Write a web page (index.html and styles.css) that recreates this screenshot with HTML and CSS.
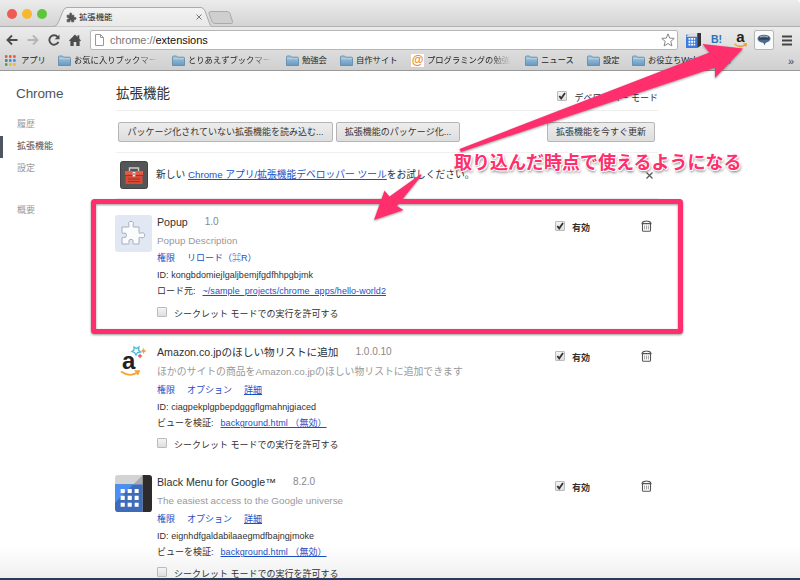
FILE: index.html
```html
<!DOCTYPE html>
<html lang="ja">
<head>
  <meta charset="UTF-8">
  <title>拡張機能</title>
  <link rel="stylesheet" href="styles.css">
</head>
<body>
  <!-- shared icons -->
  <svg class="defs" width="0" height="0">
    <defs>
      <linearGradient id="folder-fill" x1="0" y1="0" x2="0" y2="1"><stop offset="0" stop-color="#a5c8e2"/><stop offset="1" stop-color="#6799bf"/></linearGradient>
      <linearGradient id="tab-fill" x1="0" y1="0" x2="0" y2="1"><stop offset="0" stop-color="#f3f3f3"/><stop offset="1" stop-color="#e8e8e8"/></linearGradient>
      <symbol id="folder" viewBox="0 0 13 12">
        <path d="M.5 10.5V2Q.5 1 1.5 1H4.5L5.5 2.2H11.5Q12.5 2.2 12.5 3.2V10.5Z" fill="url(#folder-fill)" stroke="#5c87a8" stroke-width=".8"/>
        <path d="M1 3.7H12" stroke="#c3dced" stroke-width=".7"/>
      </symbol>
      <symbol id="trash" viewBox="0 0 11 12">
        <path d="M1.5 4V10.2Q1.5 11.3 2.6 11.3H8.4Q9.5 11.3 9.5 10.2V4M.5 3.6H10.5M1 3Q2 1.6 3.5 1.4Q5.5 .5 7.5 1.4Q9 1.6 10 3" fill="none" stroke="#555" stroke-width="1.1"/>
        <path d="M3.6 5.5V9.5M5.5 5.5V9.5M7.4 5.5V9.5" stroke="#999" stroke-width=".9"/>
      </symbol>
      <symbol id="puzzle" viewBox="0 0 28 28">
        <path d="M3 8H9.5Q10.5 8 10 6.6Q8.6 2.5 12 2.3Q15.5 2.5 14 6.6Q13.6 8 14.6 8H20V13.5Q20 14.7 21.3 14.2Q25.5 12.8 25.7 16.3Q25.5 19.8 21.3 18.4Q20 18 20 19.2V25H14.5Q13.5 25 14 23.6Q15 20.4 12 20.2Q9 20.4 10 23.6Q10.4 25 9.5 25H3V19Q3 18 4.3 18.4Q7.4 19.3 7.6 16.3Q7.4 13.3 4.3 14.2Q3 14.6 3 13.5Z"/>
      </symbol>
      <symbol id="check" viewBox="0 0 10 10">
        <path d="M2.3 5L4.2 7.4L8 2" fill="none" stroke="#333" stroke-width="1.8"/>
      </symbol>
    </defs>
  </svg>

  <div class="tabstrip">
    <div class="lights"><i class="red"></i><i class="yellow"></i><i class="green"></i></div>
    <div class="tab">
      <svg class="tab-shape" width="158" height="20" viewBox="0 0 158 20"><path d="M0 19.5Q3 19 4.500 15L9 4Q10.500 .5 13 .5H147Q149.500 .5 151 4L155 15Q156 19 158 19.500" fill="url(#tab-fill)" stroke="#aaa"/></svg>
      <div class="tab-content">
        <svg width="11" height="11" viewBox="0 0 28 28" fill="#555" stroke="#555" stroke-width="2"><use href="#puzzle"/></svg>
        <span class="tab-title">拡張機能</span>
        <svg width="6" height="6" viewBox="0 0 6 6"><path d="M.5 .5L5.5 5.5M5.5 .5L.5 5.5" stroke="#777"/></svg>
      </div>
    </div>
    <svg class="new-tab" width="26" height="14" viewBox="0 0 26 14"><path d="M3 .5H19Q21 .5 22 2.500L24.500 10.500Q25 12.500 23 12.500H7Q5 12.500 4 10.500L1 2.500Q.5 .5 3 .5Z" fill="#cfcfcf" stroke="#aaa"/></svg>
  </div>

  <div class="toolbar">
    <div class="nav">
      <svg width="12" height="12" viewBox="0 0 12 12"><path d="M11.500 6H1.500M6 1.500L1.500 6L6 10.500" fill="none" stroke="#4c4c4c" stroke-width="1.900"/></svg>
      <svg width="12" height="12" viewBox="0 0 12 12"><path d="M.5 6H10.500M6 1.500L10.500 6L6 10.500" fill="none" stroke="#b4b4b4" stroke-width="1.800"/></svg>
      <svg width="12" height="12" viewBox="0 0 12 12"><path d="M9.700 3A4.700 4.700 0 1 0 10.400 7.800" fill="none" stroke="#4c4c4c" stroke-width="1.900"/><path d="M11.500 .5V5.300H6.700Z" fill="#4c4c4c"/></svg>
      <svg width="12" height="12" viewBox="0 0 12 12"><path d="M6 .5L8.500 3V1.200H10.300V4.700L12 6.500L11.200 7.300L10.600 6.800V12H7.300V8H4.700V12H1.400V6.800L.8 7.300L0 6.500Z" fill="#4c4c4c"/></svg>
    </div>
    <div class="omnibox">
      <svg width="9" height="12" viewBox="0 0 9 12"><path d="M.5 .5H5.500L8.500 3.500V11.500H.5ZM5.500 .5V3.500H8.500" fill="#fff" stroke="#999"/></svg>
      <div class="url">chrome://<b>extensions</b></div>
      <svg width="14" height="14" viewBox="0 0 14 14"><path d="M7 .8L8.700 5.100L13.300 5.400L9.800 8.400L10.900 13L7 10.500L3.100 13L4.200 8.400L.7 5.400L5.300 5.100Z" fill="#fff" stroke="#888"/></svg>
    </div>
    <div class="actions">
      <svg width="15" height="15" viewBox="0 0 36 36"><path d="M0 4H27V36H0Z" fill="#3d7be0"/><path d="M0 9L10 0H27V9Z" fill="#ddd"/><path d="M27 0H36V30L27 36Z" fill="#333"/><path d="M6 14H22M6 21H22M6 28H22" stroke="#fff" stroke-width="4.500" stroke-dasharray="4.500 1.800"/></svg>
      <span class="hatena">B!</span>
      <span class="amazon-small">a<svg width="13" height="5" viewBox="0 0 13 5"><path d="M.5 1Q6 5.500 12 1.500M9.500 1H12.300L11.600 3.500" fill="none" stroke="#f0a030" stroke-width="1.500"/></svg></span>
      <span class="popup-button"><svg width="14" height="12" viewBox="0 0 14 12"><ellipse cx="7" cy="4.700" rx="6.500" ry="4" fill="#4d6b8c"/><path d="M6 8L7.500 11.500L9 8Z" fill="#4d6b8c"/><path d="M2 4.700H12" stroke="#293f58" stroke-width="2"/><path d="M3 3Q7 1 11 3" fill="none" stroke="#9fb2c5"/></svg></span>
      <svg width="10" height="11" viewBox="0 0 10 11"><path d="M0 1.500H10M0 5.500H10M0 9.500H10" stroke="#444" stroke-width="2"/></svg>
    </div>
  </div>

  <div class="bookmarks">
    <div class="bookmark apps"><svg width="11" height="11" viewBox="0 0 11 11"><path d="M0 1.500H11" stroke="#e34b3d" stroke-width="2.400" stroke-dasharray="2.400 1.700"/><path d="M0 5.500H11" stroke="#3c7ede" stroke-width="2.400" stroke-dasharray="2.400 1.700"/><path d="M0 5.500H2.400M0 9.500H2.400" stroke="#31a457" stroke-width="2.400"/><path d="M4.100 9.500H11" stroke="#eeb52b" stroke-width="2.400" stroke-dasharray="2.400 1.700"/></svg><span>アプリ</span></div>
    <div class="bookmark"><svg width="13" height="12"><use href="#folder"/></svg><span class="fade">お気に入りブックマー</span></div>
    <div class="bookmark"><svg width="13" height="12"><use href="#folder"/></svg><span class="fade">とりあえずブックマー</span></div>
    <div class="bookmark"><svg width="13" height="12"><use href="#folder"/></svg><span>勉強会</span></div>
    <div class="bookmark"><svg width="13" height="12"><use href="#folder"/></svg><span>自作サイト</span></div>
    <div class="bookmark"><i class="at">@</i><span class="fade">プログラミングの勉強</span></div>
    <div class="bookmark"><svg width="13" height="12"><use href="#folder"/></svg><span>ニュース</span></div>
    <div class="bookmark"><svg width="13" height="12"><use href="#folder"/></svg><span>設定</span></div>
    <div class="bookmark"><svg width="13" height="12"><use href="#folder"/></svg><span>お役立ちWebサービス</span></div>
    <div class="more">»</div>
  </div>

  <div class="page">
    <div class="sidebar">
      <h1>Chrome</h1>
      <ul>
        <li>履歴</li>
        <li class="selected">拡張機能</li>
        <li>設定</li>
        <li class="about">概要</li>
      </ul>
    </div>

    <div class="main">
      <div class="header">
        <h2>拡張機能</h2>
        <label class="dev-mode"><span class="checkbox"><svg width="10" height="10"><use href="#check"/></svg></span>デベロッパー モード</label>
      </div>
      <div class="dev-controls">
        <button class="load">パッケージ化されていない拡張機能を読み込む...</button>
        <button class="pack">拡張機能のパッケージ化...</button>
        <button class="update">拡張機能を今すぐ更新</button>
      </div>
      <div class="promo">
        <svg width="28" height="28" viewBox="0 0 28 28"><rect x=".5" y=".5" width="27" height="27" rx="2" fill="#555" stroke="#444"/><path d="M9.500 10V7H18.500V10" fill="none" stroke="#ccc" stroke-width="1.400"/><path d="M5 10H23V14H5Z" fill="#e85a45"/><path d="M5.500 14.500H22.500V23H5.500Z" fill="#d94936"/><path d="M5 14.300H23M8 18H20M8 20.500H20" stroke="#9c3024" stroke-width=".9"/><path d="M14 11V15.500" stroke="#eee" stroke-width="2.600"/><path d="M14 12V14" stroke="#555"/></svg>
        <p>新しい <a href="#">Chrome アプリ/拡張機能デベロッパー ツール</a>をお試しください。</p>
        <svg class="close" width="7" height="7" viewBox="0 0 7 7"><path d="M.5 .5L6.500 6.500M6.500 .5L.5 6.500" stroke="#555" stroke-width="1.200"/></svg>
      </div>

      <div class="extension popup">
        <div class="icon puzzle-icon"><svg width="28" height="28" viewBox="0 0 28 28" fill="#fafbfd" stroke="#a4adbc"><use href="#puzzle"/></svg></div>
        <div class="details">
          <div class="name"><span>Popup</span><span class="version">1.0</span></div>
          <div class="description">Popup Description</div>
          <div class="links"><a>権限</a><a>リロード（⌘R）</a></div>
          <div class="id">ID: kongbdomiejlgaljbemjfgdfhhpgbjmk</div>
          <div class="view"><span>ロード元:</span><a href="#">~/sample_projects/chrome_apps/hello-world2</a></div>
          <label class="incognito"><span class="checkbox"></span>シークレット モードでの実行を許可する</label>
        </div>
        <label class="enable"><span class="checkbox"><svg width="10" height="10"><use href="#check"/></svg></span>有効</label>
        <svg class="trash" width="11" height="12"><use href="#trash"/></svg>
      </div>

      <div class="extension amazon">
        <div class="icon amazon-icon"><span>a</span>
          <svg width="36" height="36" viewBox="0 0 36 36"><path d="M6 26.500Q15 33 23 27M19.500 26H24L22.500 30" fill="none" stroke="#f3a52f" stroke-width="1.700"/><path d="M19 2L21.500 3.500L24 2L23.500 5L25.500 7L22.500 7.500L21 10L19.500 7.500L17 6.500L19 5Z" fill="none" stroke="#45b8dc" stroke-width="1.300"/><path d="M28.500 3L29.500 5L31.500 6L29.500 7L28.500 9L27.500 7L25.500 6L27.500 5Z" fill="#f0a040"/><path d="M25 8.500L26 10L27.500 11L26 12L25 13.500L24 12L22.500 11L24 10Z" fill="#e4606b"/></svg>
        </div>
        <div class="details">
          <div class="name"><span>Amazon.co.jpのほしい物リストに追加</span><span class="version">1.0.0.10</span></div>
          <div class="description">ほかのサイトの商品をAmazon.co.jpのほしい物リストに追加できます</div>
          <div class="links"><a>権限</a><a>オプション</a><a href="#">詳細</a></div>
          <div class="id">ID: ciagpekplgpbepdgggflgmahnjgiaced</div>
          <div class="view"><span>ビューを検証:</span><a href="#">background.html （無効）</a></div>
          <label class="incognito"><span class="checkbox"></span>シークレット モードでの実行を許可する</label>
        </div>
        <label class="enable"><span class="checkbox"><svg width="10" height="10"><use href="#check"/></svg></span>有効</label>
        <svg class="trash" width="11" height="12"><use href="#trash"/></svg>
      </div>

      <div class="extension black-menu">
        <svg class="icon" width="37" height="37" viewBox="0 0 36 36">
          <path d="M3 0H27V9H0V3Q0 0 3 0Z" fill="#d3d3d3"/><path d="M27 0V9H18Z" fill="#aaa"/><path d="M0 9H27V36H3Q0 36 0 33Z" fill="#3e6cb8"/><path d="M0 9H18L0 27Z" fill="#4b90f1"/><path d="M27 0H33Q36 0 36 3V33Q36 36 33 36H27Z" fill="#2d2b2c"/>
          <path d="M5.500 15.500H23M5.500 22.300H23M5.500 29H23" stroke="#fff" stroke-width="4" stroke-dasharray="4 2.800"/>
        </svg>
        <div class="details">
          <div class="name"><span>Black Menu for Google™</span><span class="version">8.2.0</span></div>
          <div class="description">The easiest access to the Google universe</div>
          <div class="links"><a>権限</a><a>オプション</a><a href="#">詳細</a></div>
          <div class="id">ID: eignhdfgaldabilaaegmdfbajngjmoke</div>
          <div class="view"><span>ビューを検証:</span><a href="#">background.html （無効）</a></div>
          <label class="incognito"><span class="checkbox"></span>シークレット モードでの実行を許可する</label>
        </div>
        <label class="enable"><span class="checkbox"><svg width="10" height="10"><use href="#check"/></svg></span>有効</label>
        <svg class="trash" width="11" height="12"><use href="#trash"/></svg>
      </div>
    </div>
  </div>

  <!-- annotations over the window -->
  <svg class="annotation" width="800" height="580" viewBox="0 0 800 580">
    <rect x="93.500" y="201.500" width="587" height="130" rx="1" fill="none" stroke="#ff2e6d" stroke-width="5"/>
    <path d="M459.500 149L709.500 52.500L702.500 44L743 48.500L715 78V67.500L461 152Z" fill="#ff2e6d"/>
    <path d="M421 174L389.500 196.500L384.500 190.500L374 220L403.500 210L397 206L421.500 175.500Z" fill="#ff2e6d"/>
  </svg>
  <div class="callout">取り込んだ時点で使えるようになる</div>
</body>
</html>
```
FILE: styles.css
```css
* { box-sizing: border-box; }
body { margin: 0; width: 800px; height: 580px; overflow: hidden; position: relative; background: #fff; color: #303030; font-family: "Liberation Sans", "Noto Sans CJK JP", sans-serif; font-size: 9px; display: flex; flex-direction: column; }
svg { display: block; flex: none; }
.defs { position: absolute; }
a { color: #1b4fc4; }
a:not([href]) { text-decoration: none; }

/* window chrome */
.tabstrip { flex: none; height: 27px; display: flex; background: linear-gradient(#ececec, #d4d4d4); border-bottom: 1px solid #b0b0b0; border-radius: 0 4px 0 0; }
.lights { display: flex; gap: 5px; padding: 9px 0 0 7px; width: 54px; }
.lights i { width: 10px; height: 10px; border-radius: 50%; flex: none; }
.red { background: #ed5b52; }
.yellow { background: #f5b82f; }
.green { background: #5fc63c; }
.tab { width: 154px; height: 20px; margin-top: 7px; display: grid; }
.tab-shape, .tab-content { grid-area: 1 / 1; }
.tab-content { display: flex; align-items: center; padding: 0 10px 0 12px; z-index: 1; }
.tab-title { flex: 1; margin-left: 2px; font-size: 8.4px; line-height: 18px; color: #222; }
.new-tab { margin-top: 11px; }
.toolbar { flex: none; height: 24px; display: flex; align-items: center; background: linear-gradient(#ebebeb, #dcdcdc); padding-left: 6px; padding-top: 2px; }
.nav { display: flex; gap: 9px; width: 84px; }
.omnibox { width: 588px; height: 20px; background: #fff; border: 1px solid #b6b6b6; border-radius: 2px; display: flex; align-items: center; padding: 0 2px 0 4px; }
.url { flex: 1; font-size: 11px; padding-left: 6px; color: #777; line-height: 18px; letter-spacing: -0.04px; }
.url b { font-weight: normal; color: #111; }
.actions { display: flex; align-items: center; padding-left: 8px; flex: 1; }
.hatena { width: 27px; padding-left: 10px; font-weight: bold; font-size: 10.5px; line-height: 14px; margin-top: -2px; color: #2b73b8; }
.amazon-small { width: 17px; height: 18px; margin: -2px 0 0 4px; font-weight: bold; font-size: 15px; line-height: 14px; color: #222; display: flex; flex-direction: column; align-items: center; }
.amazon-small svg { margin-top: -1px; }
.popup-button { width: 20px; height: 20px; margin: 0 8px 0 5px; background: #fafafa; border: 1px solid #b5b5b5; border-radius: 2px; display: flex; align-items: center; justify-content: center; }
.bookmarks { flex: none; height: 20px; display: grid; grid-template-columns: 53px 114px 114px 54px 71px 114px 62px 45px 1fr auto; align-items: center; background: linear-gradient(#dcdcdc, #d0d0d0); border-bottom: 1px solid #999; padding: 0 6px 0 5px; }
.bookmark { display: flex; align-items: center; font-size: 8.3px; line-height: 19px; color: #222; white-space: nowrap; }
.bookmark span { margin-left: 3px; }
.bookmark.apps span { margin-left: 5px; }
.fade { width: 84px; -webkit-mask-image: linear-gradient(90deg, #000 75%, transparent); mask-image: linear-gradient(90deg, #000 75%, transparent); }
.at { width: 13px; height: 13px; background: #fff; color: #ef8a2d; font: bold 12px/12px "Liberation Sans", sans-serif; text-align: center; flex: none; }
.more { font-size: 11px; color: #444; }

/* sidebar */
.page { flex: 1; display: flex; min-height: 0; overflow: hidden; background: linear-gradient(#fff 475px, #f0f0f0); border-bottom: 2px solid #283d5c; }
.sidebar { width: 115px; flex: none; }
.sidebar h1 { margin: 13px 0 10px 16px; font-size: 13.5px; line-height: 20px; font-weight: normal; color: #4e5561; letter-spacing: -0.1px; }
.sidebar ul { list-style: none; margin: 0; padding: 0; }
.sidebar li { height: 22px; line-height: 21px; padding-left: 17px; color: #999; }
.sidebar li.selected { border-left: 3px solid #4e5561; padding-left: 14px; color: #464e5a; }
.sidebar li.about { margin-top: 20px; }

/* main */
.main { width: 543px; }
.header { height: 40px; display: flex; justify-content: space-between; border-bottom: 1px solid #eee; margin-left: 1px; }
.header h2 { margin: 13px 0 0; font-size: 13.5px; line-height: 20px; font-weight: normal; }
.dev-mode { display: flex; margin-top: 20px; line-height: 15px; }
.checkbox { width: 10px; height: 10px; border: 1px solid #bbb; border-radius: 1px; background: linear-gradient(#f4f4f4, #dedede); flex: none; }
.checkbox svg { margin: -1px; }
.dev-mode .checkbox { margin-right: 7px; }
.dev-controls { height: 42px; display: flex; align-items: center; padding: 0 3px 0 2px; border-bottom: 1px solid #f0f0f0; margin-left: 1px; }
.dev-controls button { height: 20px; padding: 0; border: 1px solid #b5b5b5; border-radius: 2px; background: linear-gradient(#ededed, #dedede); font: inherit; line-height: 16px; color: #333; white-space: nowrap; }
.load { width: 215px; }
.pack { width: 124px; margin-left: 3px; }
.update { width: 108px; margin-left: auto; }
.promo { height: 46px; display: flex; align-items: center; padding: 0 5px 2px 4px; border-bottom: 1px solid #f0f0f0; margin-left: 1px; }
.promo p { flex: 1; margin: 0 0 0 8px; font-size: 9.75px; line-height: 20px; white-space: nowrap; }
.close { margin-top: 1px; }

/* extension rows */
.extension { display: flex; align-items: flex-start; height: 130px; margin-top: 14px; }
.extension + .extension { margin-top: 0; }
.icon { width: 37px; height: 37px; margin-top: 2px; flex: none; }
.puzzle-icon { background: #e1e8f4; border-radius: 3px; padding: 4px; }
.amazon-icon { display: grid; }
.amazon-icon span, .amazon-icon svg { grid-area: 1 / 1; }
.amazon-icon span { font-weight: bold; font-size: 24px; line-height: 31px; padding-left: 7px; color: #222; }
.details { width: 398px; margin-left: 5px; white-space: nowrap; }
.name { font-size: 10.65px; line-height: 18px; display: flex; }
.version { color: #888; margin-left: 17px; font-size: 10px; }
.description { font-size: 9.85px; line-height: 19px; color: #999; }
.links { display: flex; gap: 12px; line-height: 17px; }
.id { line-height: 16px; letter-spacing: 0.04px; }
.view { display: flex; line-height: 16px; }
.view a { margin-left: 7px; letter-spacing: 0.05px; }
.incognito { display: flex; margin-top: 7px; line-height: 15px; }
.popup .incognito { margin-top: 8px; }
.incognito .checkbox { margin-right: 7px; }
.enable { display: flex; width: 86px; margin-top: 8px; line-height: 15px; font-weight: bold; }
.enable .checkbox { margin-right: 7px; }
.trash { margin-top: 7px; }
.amazon .description { line-height: 21px; }
.black-menu .description { line-height: 20px; }

/* annotations */
.annotation { position: absolute; left: 0; top: 0; filter: drop-shadow(0 1px 1px rgba(0,0,0,0.4)); }
.callout { position: absolute; left: 454px; top: 151px; font-size: 18px; line-height: 24px; font-weight: bold; color: #ff2e6d; white-space: nowrap; text-shadow: 1px 0 #fff, -1px 0 #fff, 0 1px #fff, 0 -1px #fff, 1px 1px #fff, -1px -1px #fff, 1px 2px 3px rgba(0,0,0,0.6); }
```
